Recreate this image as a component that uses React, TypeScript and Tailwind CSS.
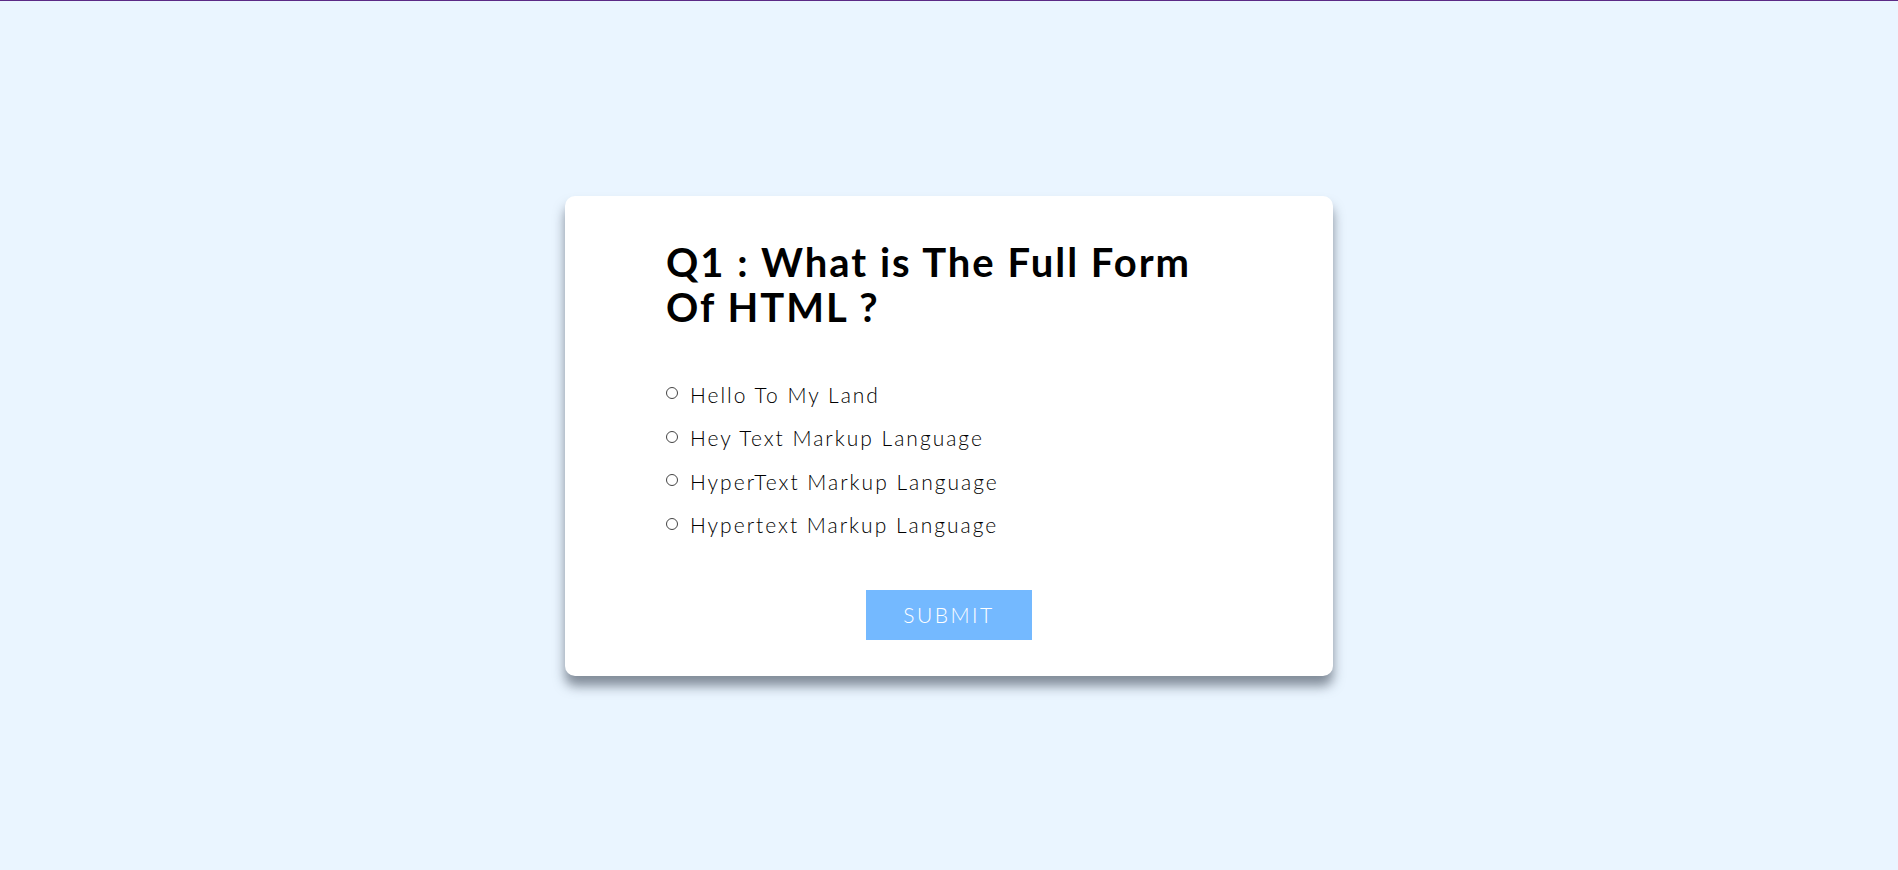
const options = [
  'Hello To My Land',
  'Hey Text Markup Language',
  'HyperText Markup Language',
  'Hypertext Markup Language',
]

export default function App() {
  return (
    <div className="h-[870px] border-t border-[#5b2a86] bg-[#eaf5ff] flex items-center justify-center font-['Lato',sans-serif]">
      <div className="w-[768px] bg-white rounded-[10px] shadow-[0_10px_12px_rgba(60,70,85,0.6)] pt-[44px] pb-[36px] px-[101px]">
        <h1 className="text-[40px] leading-[45px] font-bold text-black tracking-[2px]">
          Q1 : What is The Full Form
          <br />
          Of HTML ?
        </h1>
        <ul className="mt-[43px]">
          {options.map((opt) => (
            <li key={opt} className="flex items-center h-[43.5px] text-[21px] font-light text-black tracking-[2px]">
              <span className="w-[12px] h-[12px] mb-[2px] rounded-full border border-[#444] mr-[12px]" />
              {opt}
            </li>
          ))}
        </ul>
        <div className="mt-[43px] flex justify-center">
          <button className="w-[166px] h-[50px] bg-[#74b9ff] text-white text-[21px] font-light tracking-[2.5px]">
            SUBMIT
          </button>
        </div>
      </div>
    </div>
  )
}
